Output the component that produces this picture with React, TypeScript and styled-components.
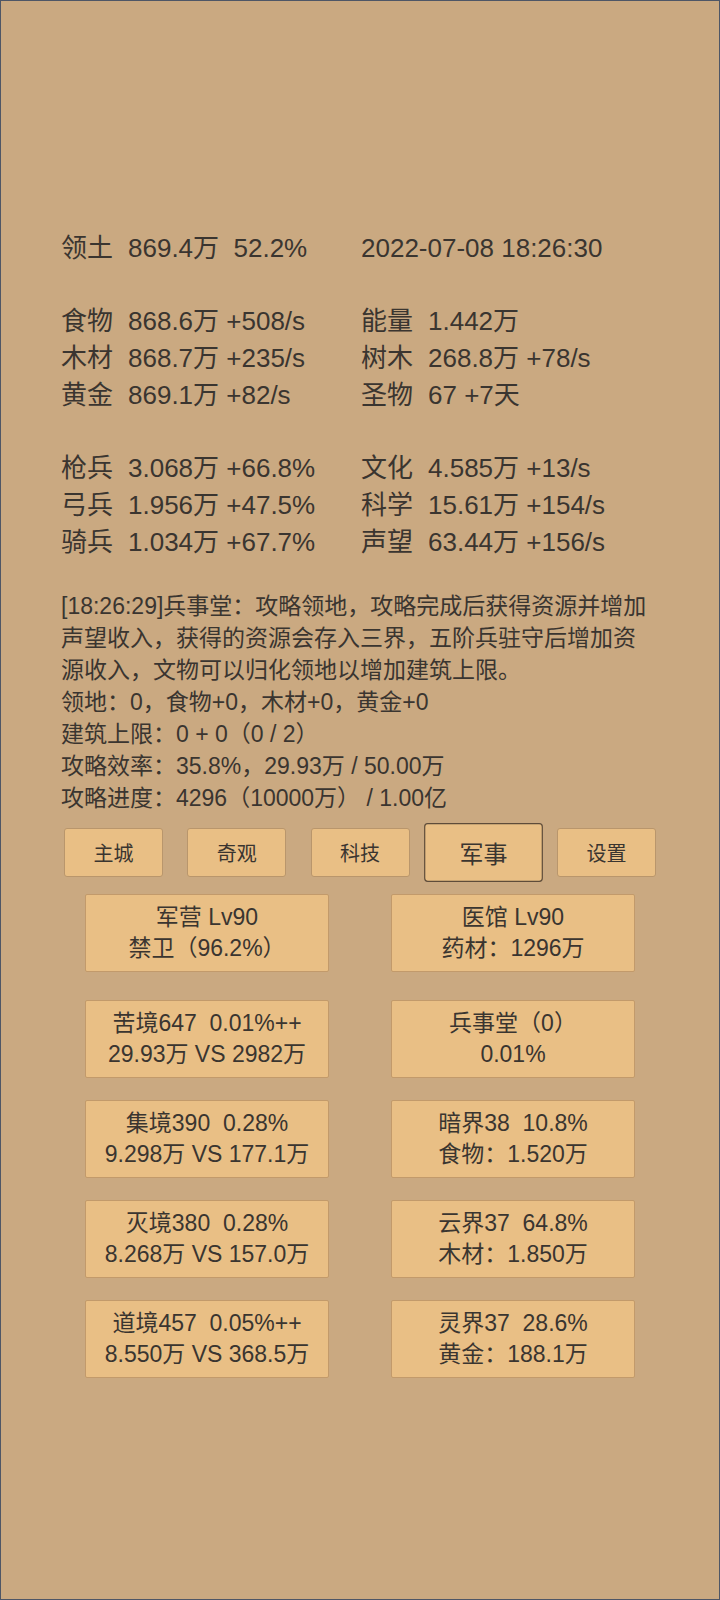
import React from "react";
import styled, { createGlobalStyle, css } from "styled-components";

const GlobalStyle = createGlobalStyle`
  html, body {
    margin: 0;
    padding: 0;
    background: #caa981;
  }
`;

const Frame = styled.div`
  width: 720px;
  height: 1600px;
  box-sizing: border-box;
  border: 1px solid #4e5666;
  background: #caa981;
  color: #3a3530;
  font-family: "Liberation Sans", "Noto Sans CJK SC", sans-serif;
  padding: 229px 0 0 60px;
  overflow: hidden;
`;

const StatsGrid = styled.div`
  display: grid;
  grid-template-columns: 300px 1fr;
  font-size: 26px;
  line-height: 36.7px;
`;

const BlankRow = styled.div`
  grid-column: 1 / -1;
  height: 36.7px;
`;

const Stat = styled.div`
  display: flex;
  white-space: pre;
`;

const StatLabel = styled.span`
  width: 67px;
  flex: none;
`;

const Log = styled.div`
  margin-top: 29.5px;
  width: 600px;
  font-size: 23px;
  line-height: 32px;
`;

const LogLine = styled.div`
  white-space: nowrap;
`;

const NavBar = styled.div`
  margin: 14px 0 0 3px;
  width: 592px;
  display: flex;
  justify-content: space-between;
`;

const NavButton = styled.div<{ $active?: boolean }>`
  width: 99px;
  height: 49px;
  box-sizing: border-box;
  display: flex;
  align-items: center;
  justify-content: center;
  background: #e9bf85;
  border: 1px solid #b9966c;
  border-radius: 3px;
  font-size: 20px;
  ${(p) =>
    p.$active &&
    css`
      transform: scale(1.2);
      border-color: #5e4c3a;
    `}
`;

const CardGrid = styled.div<{ $top: number }>`
  margin: ${(p) => p.$top}px 0 0 24px;
  display: grid;
  grid-template-columns: 244px 244px;
  column-gap: 62px;
  row-gap: 22px;
`;

const Card = styled.div`
  height: 78px;
  box-sizing: border-box;
  display: flex;
  flex-direction: column;
  align-items: center;
  justify-content: center;
  background: #e9bf85;
  border: 1px solid #c29a6b;
  border-radius: 2px;
  font-size: 23px;
  line-height: 31px;
  white-space: pre;
`;

type Row = [string, string];

const stats: (Row | null)[][] = [
  [["领土", "869.4万  52.2%"], ["", "2022-07-08 18:26:30"]],
  [],
  [["食物", "868.6万 +508/s"], ["能量", "1.442万"]],
  [["木材", "868.7万 +235/s"], ["树木", "268.8万 +78/s"]],
  [["黄金", "869.1万 +82/s"], ["圣物", "67 +7天"]],
  [],
  [["枪兵", "3.068万 +66.8%"], ["文化", "4.585万 +13/s"]],
  [["弓兵", "1.956万 +47.5%"], ["科学", "15.61万 +154/s"]],
  [["骑兵", "1.034万 +67.7%"], ["声望", "63.44万 +156/s"]],
];

const logLines = [
  "[18:26:29]兵事堂：攻略领地，攻略完成后获得资源并增加",
  "声望收入，获得的资源会存入三界，五阶兵驻守后增加资",
  "源收入，文物可以归化领地以增加建筑上限。",
  "领地：0，食物+0，木材+0，黄金+0",
  "建筑上限：0 + 0（0 / 2）",
  "攻略效率：35.8%，29.93万 / 50.00万",
  "攻略进度：4296（10000万） / 1.00亿",
];

const tabs = ["主城", "奇观", "科技", "军事", "设置"];

const buildings: Row[] = [
  ["军营 Lv90", "禁卫（96.2%）"],
  ["医馆 Lv90", "药材：1296万"],
];

const realms: Row[] = [
  ["苦境647  0.01%++", "29.93万 VS 2982万"],
  ["兵事堂（0）", "0.01%"],
  ["集境390  0.28%", "9.298万 VS 177.1万"],
  ["暗界38  10.8%", "食物：1.520万"],
  ["灭境380  0.28%", "8.268万 VS 157.0万"],
  ["云界37  64.8%", "木材：1.850万"],
  ["道境457  0.05%++", "8.550万 VS 368.5万"],
  ["灵界37  28.6%", "黄金：188.1万"],
];

export default function App() {
  return (
    <>
      <GlobalStyle />
      <Frame>
        <StatsGrid>
          {stats.map((row, i) =>
            row.length === 0 ? (
              <BlankRow key={i} />
            ) : (
              row.map((cell, j) => (
                <Stat key={`${i}-${j}`}>
                  {cell && cell[0] ? (
                    <>
                      <StatLabel>{cell[0]}</StatLabel>
                      <span>{cell[1]}</span>
                    </>
                  ) : (
                    <span>{cell ? cell[1] : ""}</span>
                  )}
                </Stat>
              ))
            )
          )}
        </StatsGrid>

        <Log>
          {logLines.map((l) => (
            <LogLine key={l}>{l}</LogLine>
          ))}
        </Log>

        <NavBar>
          {tabs.map((t) => (
            <NavButton key={t} $active={t === "军事"}>
              {t}
            </NavButton>
          ))}
        </NavBar>

        <CardGrid $top={17}>
          {buildings.map(([a, b]) => (
            <Card key={a}>
              <span>{a}</span>
              <span>{b}</span>
            </Card>
          ))}
        </CardGrid>

        <CardGrid $top={28}>
          {realms.map(([a, b]) => (
            <Card key={a}>
              <span>{a}</span>
              <span>{b}</span>
            </Card>
          ))}
        </CardGrid>
      </Frame>
    </>
  );
}
